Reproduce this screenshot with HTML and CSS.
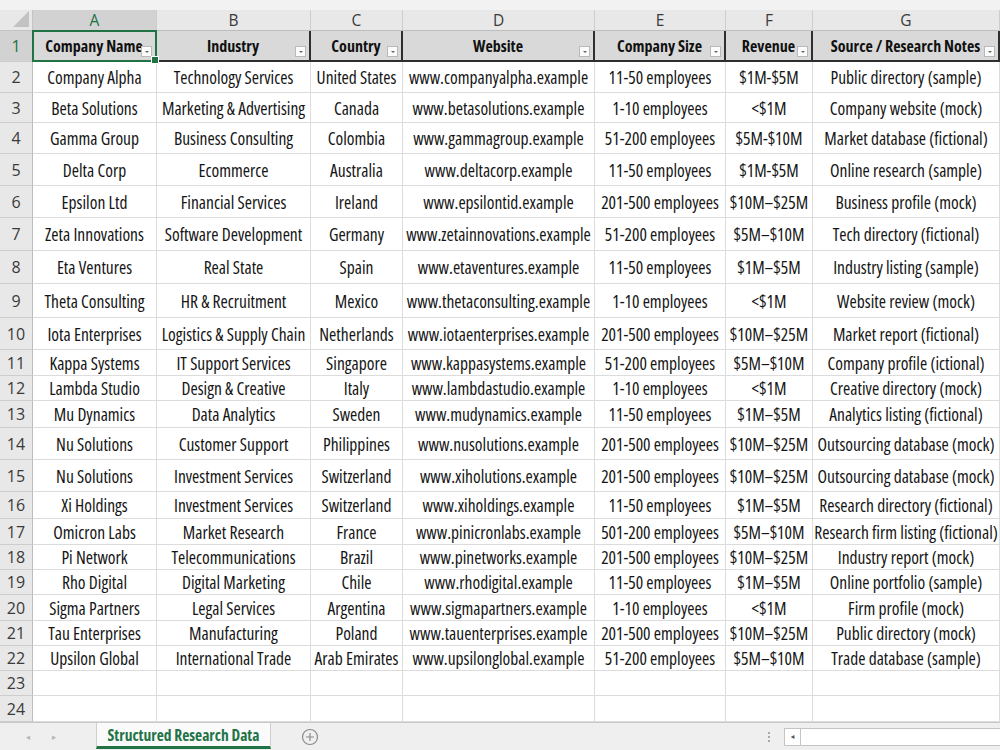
FILE: index.html
```html
<!DOCTYPE html>
<html lang="en">
<head>
<meta charset="utf-8">
<title>Structured Research Data</title>
<link rel="stylesheet" href="styles.css">
</head>
<body>
<div class="app">
  <div class="topstrip"></div>
  <div class="sheet">
    <div class="corner"><svg width="16" height="16" viewBox="0 0 16 16"><polygon points="16,0 16,16 0,16" fill="#c2c2c2"/></svg></div>
    <div class="ch sel">A</div><div class="ch">B</div><div class="ch">C</div><div class="ch">D</div><div class="ch">E</div><div class="ch">F</div><div class="ch last">G</div>

    <div class="rh sel">1</div>
    <div class="c hd active">Company Name<span class="fb"></span></div>
    <div class="c hd">Industry<span class="fb"></span></div>
    <div class="c hd">Country<span class="fb"></span></div>
    <div class="c hd">Website<span class="fb"></span></div>
    <div class="c hd">Company Size<span class="fb"></span></div>
    <div class="c hd">Revenue<span class="fb"></span></div>
    <div class="c hd">Source / Research Notes<span class="fb"></span></div>

    <div class="rh">2</div><div class="c">Company Alpha</div><div class="c">Technology Services</div><div class="c">United States</div><div class="c">www.companyalpha.example</div><div class="c">11-50 employees</div><div class="c">$1M-$5M</div><div class="c">Public directory (sample)</div>
    <div class="rh">3</div><div class="c">Beta Solutions</div><div class="c">Marketing &amp; Advertising</div><div class="c">Canada</div><div class="c">www.betasolutions.example</div><div class="c">1-10 employees</div><div class="c">&lt;$1M</div><div class="c">Company website (mock)</div>
    <div class="rh">4</div><div class="c">Gamma Group</div><div class="c">Business Consulting</div><div class="c">Colombia</div><div class="c">www.gammagroup.example</div><div class="c">51-200 employees</div><div class="c">$5M-$10M</div><div class="c">Market database (fictional)</div>
    <div class="rh">5</div><div class="c">Delta Corp</div><div class="c">Ecommerce</div><div class="c">Australia</div><div class="c">www.deltacorp.example</div><div class="c">11-50 employees</div><div class="c">$1M-$5M</div><div class="c">Online research (sample)</div>
    <div class="rh">6</div><div class="c">Epsilon Ltd</div><div class="c">Financial Services</div><div class="c">Ireland</div><div class="c">www.epsilontid.example</div><div class="c">201-500 employees</div><div class="c">$10M–$25M</div><div class="c">Business profile (mock)</div>
    <div class="rh">7</div><div class="c">Zeta Innovations</div><div class="c">Software Development</div><div class="c">Germany</div><div class="c">www.zetainnovations.example</div><div class="c">51-200 employees</div><div class="c">$5M–$10M</div><div class="c">Tech directory (fictional)</div>
    <div class="rh">8</div><div class="c">Eta Ventures</div><div class="c">Real State</div><div class="c">Spain</div><div class="c">www.etaventures.example</div><div class="c">11-50 employees</div><div class="c">$1M–$5M</div><div class="c">Industry listing (sample)</div>
    <div class="rh">9</div><div class="c">Theta Consulting</div><div class="c">HR &amp; Recruitment</div><div class="c">Mexico</div><div class="c">www.thetaconsulting.example</div><div class="c">1-10 employees</div><div class="c">&lt;$1M</div><div class="c">Website review (mock)</div>
    <div class="rh">10</div><div class="c">Iota Enterprises</div><div class="c">Logistics &amp; Supply Chain</div><div class="c">Netherlands</div><div class="c">www.iotaenterprises.example</div><div class="c">201-500 employees</div><div class="c">$10M–$25M</div><div class="c">Market report (fictional)</div>
    <div class="rh">11</div><div class="c">Kappa Systems</div><div class="c">IT Support Services</div><div class="c">Singapore</div><div class="c">www.kappasystems.example</div><div class="c">51-200 employees</div><div class="c">$5M–$10M</div><div class="c">Company profile (ictional)</div>
    <div class="rh">12</div><div class="c">Lambda Studio</div><div class="c">Design &amp; Creative</div><div class="c">Italy</div><div class="c">www.lambdastudio.example</div><div class="c">1-10 employees</div><div class="c">&lt;$1M</div><div class="c">Creative directory (mock)</div>
    <div class="rh">13</div><div class="c">Mu Dynamics</div><div class="c">Data Analytics</div><div class="c">Sweden</div><div class="c">www.mudynamics.example</div><div class="c">11-50 employees</div><div class="c">$1M–$5M</div><div class="c">Analytics listing (fictional)</div>
    <div class="rh">14</div><div class="c">Nu Solutions</div><div class="c">Customer Support</div><div class="c">Philippines</div><div class="c">www.nusolutions.example</div><div class="c">201-500 employees</div><div class="c">$10M–$25M</div><div class="c">Outsourcing database (mock)</div>
    <div class="rh">15</div><div class="c">Nu Solutions</div><div class="c">Investment Services</div><div class="c">Switzerland</div><div class="c">www.xiholutions.example</div><div class="c">201-500 employees</div><div class="c">$10M–$25M</div><div class="c">Outsourcing database (mock)</div>
    <div class="rh">16</div><div class="c">Xi Holdings</div><div class="c">Investment Services</div><div class="c">Switzerland</div><div class="c">www.xiholdings.example</div><div class="c">11-50 employees</div><div class="c">$1M–$5M</div><div class="c">Research directory (fictional)</div>
    <div class="rh">17</div><div class="c">Omicron Labs</div><div class="c">Market Research</div><div class="c">France</div><div class="c">www.pinicronlabs.example</div><div class="c">501-200 employees</div><div class="c">$5M–$10M</div><div class="c">Research firm listing (fictional)</div>
    <div class="rh">18</div><div class="c">Pi Network</div><div class="c">Telecommunications</div><div class="c">Brazil</div><div class="c">www.pinetworks.example</div><div class="c">201-500 employees</div><div class="c">$10M–$25M</div><div class="c">Industry report (mock)</div>
    <div class="rh">19</div><div class="c">Rho Digital</div><div class="c">Digital Marketing</div><div class="c">Chile</div><div class="c">www.rhodigital.example</div><div class="c">11-50 employees</div><div class="c">$1M–$5M</div><div class="c">Online portfolio (sample)</div>
    <div class="rh">20</div><div class="c">Sigma Partners</div><div class="c">Legal Services</div><div class="c">Argentina</div><div class="c">www.sigmapartners.example</div><div class="c">1-10 employees</div><div class="c">&lt;$1M</div><div class="c">Firm profile (mock)</div>
    <div class="rh">21</div><div class="c">Tau Enterprises</div><div class="c">Manufacturing</div><div class="c">Poland</div><div class="c">www.tauenterprises.example</div><div class="c">201-500 employees</div><div class="c">$10M–$25M</div><div class="c">Public directory (mock)</div>
    <div class="rh">22</div><div class="c">Upsilon Global</div><div class="c">International Trade</div><div class="c">Arab Emirates</div><div class="c">www.upsilonglobal.example</div><div class="c">51-200 employees</div><div class="c">$5M–$10M</div><div class="c">Trade database (sample)</div>
    <div class="rh">23</div><div class="c"></div><div class="c"></div><div class="c"></div><div class="c"></div><div class="c"></div><div class="c"></div><div class="c"></div>
    <div class="rh">24</div><div class="c"></div><div class="c"></div><div class="c"></div><div class="c"></div><div class="c"></div><div class="c"></div><div class="c"></div>
  </div>
  <div class="tabbar">
    <div class="nav"><span class="arrow">&#9666;</span><span class="arrow">&#9656;</span></div>
    <div class="tab">Structured Research Data</div>
    <div class="add"><svg width="18" height="18" viewBox="0 0 18 18"><circle cx="9" cy="9" r="7.5" fill="none" stroke="#8a8a8a" stroke-width="1.2"/><path d="M9 5v8M5 9h8" stroke="#8a8a8a" stroke-width="1.2"/></svg></div>
    <div class="spacer"></div>
    <div class="dots"><i></i><i></i><i></i></div>
    <div class="hscroll"><span class="sbtn">&#9666;</span><span class="track"></span></div>
  </div>
</div>
</body>
</html>
```
FILE: styles.css
```css
* { box-sizing: border-box; }
html, body { margin: 0; padding: 0; }
body {
  width: 1000px;
  height: 750px;
  overflow: hidden;
  background: #fff;
  font-family: "Open Sans", "Noto Sans", sans-serif;
  font-stretch: 80%;
  color: #151515;
}
.app { display: flex; flex-direction: column; height: 750px; }
.topstrip { height: 10px; background: #f2f2f2; }
.sheet {
  display: grid;
  grid-template-columns: 33px 124px 154px 92px 192px 131px 87px 187px;
  grid-template-rows: 21px 31px 31px 30px 31px 32px 32px 33px 33px 34px 32px 26px 25px 27px 32px 32px 27px 26px 25px 25px 26px 25px 25px 25px 26px;
  height: 712px;
}
.corner {
  background: #e8e8e8;
  border-right: 1px solid #c4c4c4;
  border-bottom: 1px solid #c4c4c4;
  display: flex;
  align-items: flex-end;
  justify-content: flex-end;
  padding: 0 3px 3px 0;
}
.ch {
  background: #e8e8e8;
  border-right: 1px solid #cdcdcd;
  border-bottom: 1px solid #bdbdbd;
  display: flex;
  align-items: center;
  justify-content: center;
  font-size: 15.5px;
  font-stretch: 90%;
  color: #3a3a3a;
}
.ch.sel { background: #d2d2d2; color: #217346; }
.rh {
  background: #e8e8e8;
  border-right: 1px solid #bdbdbd;
  border-bottom: 1px solid #cdcdcd;
  display: flex;
  align-items: center;
  justify-content: center;
  font-size: 16px;
  font-stretch: 90%;
  color: #3a3a3a;
}
.rh.sel { background: #d2d2d2; color: #217346; }
.c {
  border-right: 1px solid #dcdcdc;
  border-bottom: 1px solid #dcdcdc;
  display: flex;
  align-items: center;
  justify-content: center;
  white-space: nowrap;
  overflow: hidden;
  font-size: 17.5px;
}
.hd {
  position: relative;
  overflow: visible;
  background: #d9d9d9;
  font-weight: 700;
  font-size: 16px;
  font-stretch: 75%;
  color: #111;
  border-right: 2px solid #2e2e2e;
  border-bottom: 2px solid #2e2e2e;
}
.fb {
  position: absolute;
  right: 3px;
  bottom: 3px;
  width: 11px;
  height: 11px;
  background: #fbfbfb;
  border: 1px solid #b9b9b9;
}
.fb::after {
  content: "";
  position: absolute;
  left: 2.5px;
  top: 4px;
  border-left: 2.5px solid transparent;
  border-right: 2.5px solid transparent;
  border-top: 2.5px solid #666;
}
.hd.active::before {
  content: "";
  position: absolute;
  left: -1px;
  top: -1px;
  right: -2px;
  bottom: -2px;
  border: 2px solid #217346;
  z-index: 2;
}
.hd.active::after {
  content: "";
  position: absolute;
  right: -4px;
  bottom: -4px;
  width: 6px;
  height: 6px;
  background: #217346;
  border: 1px solid #fff;
  z-index: 3;
}
.tabbar {
  height: 28px;
  background: #efefef;
  border-top: 1px solid #c8c8c8;
  display: flex;
  align-items: stretch;
}
.nav {
  width: 96px;
  display: flex;
  align-items: center;
  padding-left: 26px;
  gap: 22px;
}
.arrow { color: #b8b8b8; font-size: 9px; font-family: "DejaVu Sans", sans-serif; }
.tab {
  width: 175px;
  background: #fafafa;
  border-left: 1px solid #cfcfcf;
  border-right: 1px solid #cfcfcf;
  border-bottom: 3px solid #217346;
  color: #217346;
  font-weight: 700;
  font-size: 15.5px;
  font-stretch: 78%;
  display: flex;
  align-items: center;
  justify-content: center;
  margin-bottom: 1px;
}
.add { display: flex; align-items: center; margin-left: 30px; }
.spacer { flex: 1; }
.dots {
  width: 16px;
  margin-right: 7px;
  display: flex;
  flex-direction: column;
  justify-content: center;
  align-items: center;
  gap: 2px;
}
.dots i { display: block; width: 2px; height: 2px; background: #a8a8a8; }
.hscroll {
  width: 216px;
  display: flex;
  align-items: center;
}
.sbtn {
  width: 17px;
  height: 18px;
  background: #fff;
  border: 1px solid #c4c4c4;
  color: #555;
  font-size: 8px;
  font-family: "DejaVu Sans", sans-serif;
  display: flex;
  align-items: center;
  justify-content: center;
}
.track {
  flex: 1;
  height: 18px;
  background: #fff;
  border-top: 1px solid #c4c4c4;
  border-bottom: 1px solid #c4c4c4;
}
```
